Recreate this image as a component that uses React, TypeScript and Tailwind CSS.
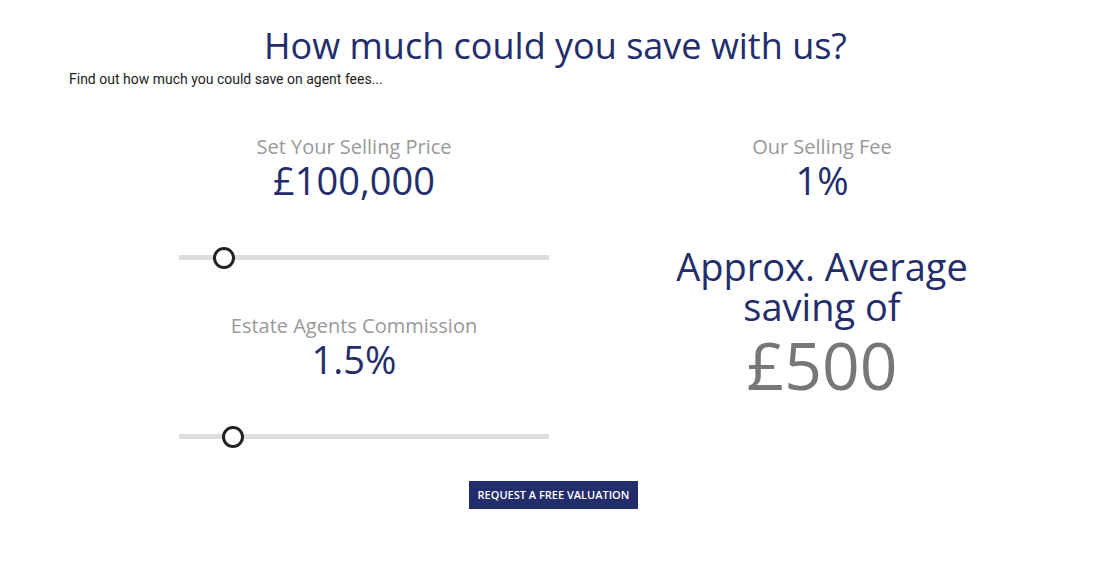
import React from 'react';

const navy = 'text-[#232d6b]';

const Slider = ({ pos }: { pos: number }) => (
  <div className="relative ml-[44px] h-[5px] w-[370px] bg-[#dddddd]">
    <div
      className="absolute top-1/2 h-[22px] w-[22px] -translate-x-1/2 -translate-y-1/2 rounded-full border-[3px] border-[#222] bg-white"
      style={{ left: `${pos}px` }}
    />
  </div>
);

const Stat = ({ label, value }: { label: string; value: string }) => (
  <div className="text-center">
    <div className="text-[20px] leading-[24px] text-[#999]">{label}</div>
    <div className={`text-[38px] leading-[42px] ${navy}`}>{value}</div>
  </div>
);

export default function App() {
  return (
    <div className="min-h-screen bg-white font-['Open_Sans',sans-serif]">
      <h1 className={`pl-[10px] pt-[22px] text-center text-[36px] leading-[48px] ${navy}`}>
        How much could you save with us?
      </h1>
      <p className="ml-[69px] font-['Roboto',sans-serif] text-[14px] leading-[18px] text-[#222]">
        Find out how much you could save on agent fees...
      </p>

      <div className="ml-[135px] mt-[47px] grid w-[916px] grid-cols-2">
        {/* Calculator inputs */}
        <div className="pr-[20px]">
          <Stat label="Set Your Selling Price" value="£100,000" />
          <div className="mt-[54px]">
            <Slider pos={45} />
          </div>
          <div className="mt-[54px]">
            <Stat label="Estate Agents Commission" value="1.5%" />
          </div>
          <div className="mt-[54px]">
            <Slider pos={54} />
          </div>
        </div>

        {/* Result */}
        <div className="text-center">
          <Stat label="Our Selling Fee" value="1%" />
          <div className={`mt-[45px] text-[38px] leading-[40px] ${navy}`}>
            Approx. Average
            <br />
            saving of
          </div>
          <div className="text-[66px] leading-[76px] text-[#777]">£500</div>
        </div>
      </div>

      <div className="mt-[42px] flex justify-center pl-[6px]">
        <button className="h-[28px] bg-[#232d6b] px-[9px] text-[11px] font-semibold text-white">
          REQUEST A FREE VALUATION
        </button>
      </div>
    </div>
  );
}
